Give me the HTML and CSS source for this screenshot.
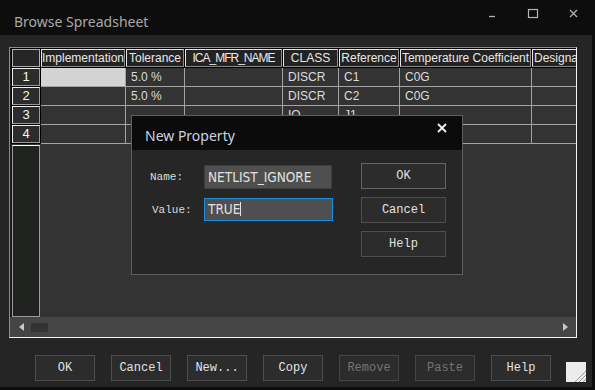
FILE: index.html
```html
<!DOCTYPE html>
<html lang="en">

<head>
    <meta charset="UTF-8" />
    <title>Browse Spreadsheet</title>
    <link rel="stylesheet" href="styles.css">
</head>

<body>

    <div class="window">
        <div class="titlebar">
            <span class="title">Browse Spreadsheet</span>
            <svg class="caption" width="100" height="14" viewBox="0 0 100 14">
                <line x1="5" y1="10.5" x2="11" y2="10.5" stroke="#b4b4b4" stroke-width="1.3" />
                <rect x="44.5" y="3.5" width="9" height="8" fill="none" stroke="#b4b4b4" stroke-width="1.2" />
                <path d="M86 4 L93 11 M93 4 L86 11" stroke="#b4b4b4" stroke-width="1.3" />
            </svg>
        </div>

        <div class="client">
            <div class="frame">
                <div class="sheet">
                    <div class="table">
                        <div class="corner"></div>
                        <div class="colhdr">Implementation</div>
                        <div class="colhdr">Tolerance</div>
                        <div class="colhdr tight">ICA_MFR_NAME</div>
                        <div class="colhdr">CLASS</div>
                        <div class="colhdr">Reference</div>
                        <div class="colhdr">Temperature Coefficient</div>
                        <div class="colhdr">Designator</div>

                        <div class="rowhdr">1</div>
                        <div class="cell selected"></div>
                        <div class="cell">5.0 %</div>
                        <div class="cell"></div>
                        <div class="cell">DISCR</div>
                        <div class="cell">C1</div>
                        <div class="cell">C0G</div>
                        <div class="cell"></div>

                        <div class="rowhdr">2</div>
                        <div class="cell"></div>
                        <div class="cell">5.0 %</div>
                        <div class="cell"></div>
                        <div class="cell">DISCR</div>
                        <div class="cell">C2</div>
                        <div class="cell">C0G</div>
                        <div class="cell"></div>

                        <div class="rowhdr">3</div>
                        <div class="cell"></div>
                        <div class="cell"></div>
                        <div class="cell"></div>
                        <div class="cell">IO</div>
                        <div class="cell">J1</div>
                        <div class="cell"></div>
                        <div class="cell"></div>

                        <div class="rowhdr">4</div>
                        <div class="cell"></div>
                        <div class="cell"></div>
                        <div class="cell"></div>
                        <div class="cell"></div>
                        <div class="cell"></div>
                        <div class="cell"></div>
                        <div class="cell"></div>
                    </div>
                    <div class="filler">
                        <div class="stub"></div>
                    </div>
                </div>
                <div class="hscroll">
                    <svg width="8" height="10" viewBox="0 0 8 10"><path d="M6 1 L1 5 L6 9 Z" fill="#c8c8c8" /></svg>
                    <div class="thumb"></div>
                    <svg class="right-arrow" width="8" height="10" viewBox="0 0 8 10"><path d="M2 1 L7 5 L2 9 Z" fill="#c8c8c8" /></svg>
                </div>
            </div>

            <div class="actions">
                <button class="btn">OK</button>
                <button class="btn">Cancel</button>
                <button class="btn">New...</button>
                <button class="btn">Copy</button>
                <button class="btn disabled">Remove</button>
                <button class="btn disabled">Paste</button>
                <button class="btn">Help</button>
                <svg class="grip" width="20" height="20" viewBox="0 0 20 20">
                    <rect width="20" height="20" fill="#ececec" />
                    <path d="M20 9 L9 20 M20 13 L13 20 M20 17 L17 20" stroke="#9a9a9a" stroke-width="1" />
                </svg>
            </div>

            <div class="dialog">
                <div class="dlg-title">
                    <span>New Property</span>
                    <svg class="dlg-close" width="12" height="12" viewBox="0 0 12 12">
                        <path d="M2 2 L10 10 M10 2 L2 10" stroke="#f2f2f2" stroke-width="1.8" />
                    </svg>
                </div>
                <div class="dlg-body">
                    <div class="form">
                        <div class="field">
                            <label>Name:</label>
                            <div class="input">NETLIST_IGNORE</div>
                        </div>
                        <div class="field">
                            <label class="value-label">Value:</label>
                            <div class="input focused">TRUE<span class="caret"></span></div>
                        </div>
                    </div>
                    <div class="dlg-buttons">
                        <button class="btn default">OK</button>
                        <button class="btn">Cancel</button>
                        <button class="btn">Help</button>
                    </div>
                </div>
            </div>
        </div>
    </div>

</body>

</html>
```

FILE: styles.css
```css
body {
    margin: 0;
    background: #0d0d0d;
    width: 595px;
    height: 390px;
    overflow: hidden;
    font-family: "Liberation Sans", Arial, sans-serif;
}

.window {
    position: relative;
    width: 595px;
}

.titlebar {
    height: 35px;
    display: flex;
    align-items: flex-start;
    background: #0d0d0d;
}

.title {
    margin: 12px 0 0 14px;
    font-family: "Noto Sans", sans-serif;
    font-size: 14px;
    line-height: 19px;
    color: #a8a8a8;
}

.caption {
    margin: 6px 11px 0 auto;
}

.client {
    position: relative;
    width: 592px;
    height: 352px;
    background: #252525;
    padding: 12px 0 0 9px;
    box-sizing: border-box;
}

/* spreadsheet */

.frame {
    width: 568px;
    height: 291px;
    box-sizing: border-box;
    border: 1px solid;
    border-color: #8c8c8c #f4f4f4 #f4f4f4 #8c8c8c;
    background: #1b1b1b;
    display: flex;
    flex-direction: column;
}

.sheet {
    flex: 1;
    padding: 1px 0 0 2px;
    overflow: hidden;
    display: flex;
    flex-direction: column;
    background: #1b1b1b;
}

.table {
    display: grid;
    grid-template-columns: 28px 84px 58px 97px 55px 60px 131px 62px;
    grid-auto-rows: 18px;
    gap: 1px;
    padding-bottom: 1px;
    background: #a3a3a3;
    font-size: 12px;
    line-height: 18px;
}

.corner,
.colhdr,
.rowhdr {
    box-sizing: border-box;
    border: 1px solid;
    box-shadow: 0 0 0 1px #000;
}

.corner {
    background: #262626;
    border-color: #b0b0b0;
}

.colhdr {
    background: #232323;
    border-color: #e4e4e4 #8a8a8a #8a8a8a #e4e4e4;
    color: #e8e8e8;
    display: flex;
    justify-content: center;
    line-height: 16px;
    white-space: nowrap;
    overflow: hidden;
}

.colhdr.tight {
    letter-spacing: -1px;
}

.rowhdr {
    background: #2c2c2c;
    border-color: #f0f0f0 #9a9a9a #9a9a9a #f0f0f0;
    color: #f4f4f4;
    text-align: center;
    line-height: 16px;
    font-size: 13px;
}

.cell {
    background: #333;
    color: #dcdcdc;
    padding-left: 5px;
    white-space: nowrap;
    overflow: hidden;
}

.cell.selected {
    background: #d3d3d3;
}

.filler {
    flex: 1;
    background: #333;
    padding-top: 1px;
    display: flex;
}

.stub {
    width: 28px;
    box-sizing: border-box;
    border: 1px solid #9a9a9a;
    border-top-color: #fff;
    background: #1f221f;
}

.hscroll {
    height: 20px;
    background: #454545;
    display: flex;
    align-items: center;
    padding: 0 7px 0 8px;
}

.thumb {
    width: 17px;
    height: 9px;
    background: #333;
    margin-left: 5px;
}

.right-arrow {
    margin-left: auto;
}

/* buttons */

.btn {
    width: 60px;
    height: 26px;
    padding: 0;
    background: #2c2c2c;
    border: 1px solid #4e4e4e;
    color: #e2e2e2;
    font-family: "Liberation Mono", "Courier New", monospace;
    font-size: 12px;
}

.btn.disabled {
    color: #747474;
    border-color: #444;
}

.actions {
    display: flex;
    gap: 16px;
    margin: 17px 0 0 26px;
}

.grip {
    margin: 7px 0 0 -1px;
}

/* dialog */

.dialog {
    position: absolute;
    left: 131px;
    top: 80px;
    width: 332px;
    height: 160px;
    box-sizing: border-box;
    border: 1px solid #5e5e5e;
    background: #262626;
}

.dlg-title {
    height: 34px;
    background: #0b0b0b;
    display: flex;
    align-items: center;
    padding-left: 13px;
    font-family: "Noto Sans", sans-serif;
    font-size: 14px;
    color: #c9d2e0;
}

.dlg-title span {
    margin-top: 4px;
}

.dlg-close {
    margin: -10px 14px 0 auto;
}

.dlg-body {
    display: flex;
    padding: 13px 0 0 18px;
}

.form {
    display: flex;
    flex-direction: column;
    gap: 9px;
    padding-top: 2px;
}

.field {
    display: flex;
    align-items: center;
}

.field label {
    width: 54px;
    font-family: "Liberation Mono", monospace;
    font-size: 11px;
    color: #dcdcdc;
}

.field .value-label {
    padding-left: 2px;
    width: 52px;
}

.input {
    width: 128px;
    height: 24px;
    box-sizing: border-box;
    background: #4f4f4f;
    border: 1px solid #3d3d3d;
    padding-left: 3px;
    font-family: "DejaVu Sans", sans-serif;
    font-stretch: condensed;
    font-size: 13.5px;
    line-height: 22px;
    color: #e2e2e2;
}

.input.focused {
    width: 129px;
    height: 23px;
    line-height: 21px;
    border-color: #1c8ee0;
}

.caret {
    display: inline-block;
    width: 1px;
    height: 14px;
    background: #e2e2e2;
    vertical-align: -2px;
}

.dlg-buttons {
    display: flex;
    flex-direction: column;
    gap: 8px;
    margin-left: 28px;
}

.dlg-buttons .btn {
    width: 85px;
}

.dlg-buttons .btn.default {
    border-color: #636363;
}
```
